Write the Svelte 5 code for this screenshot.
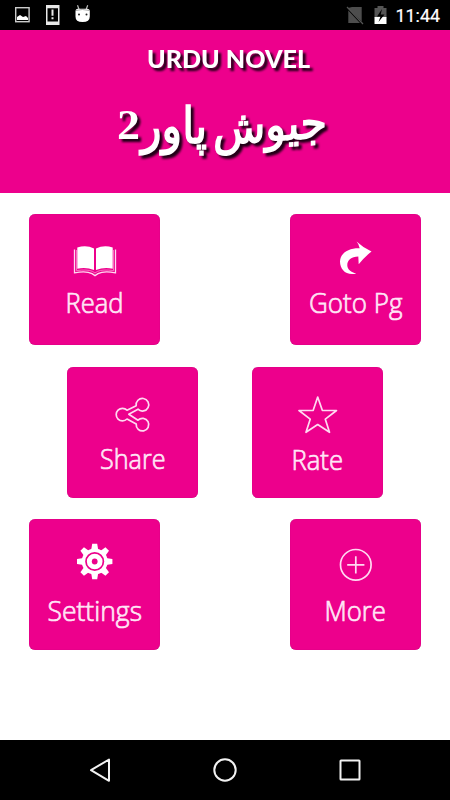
<script>
  const rows = [
    [
      { name: 'Read', x: 36.5, w: 58, y: 98.500 },
      { name: 'Goto Pg', x: 19, w: 93.5, y: 98.500 }
    ],
    [
      { name: 'Share', x: 33, w: 65.5, y: 101.500 },
      { name: 'Rate', x: 39.500, w: 51.500, y: 102.800 }
    ],
    [
      { name: 'Settings', x: 18.500, w: 94.500, y: 101.500 },
      { name: 'More', x: 34.500, w: 61.500, y: 102 }
    ]
  ];
</script>

<div class="screen">
  <div class="status">
    <svg width="100" height="30" viewBox="0 0 100 30">
      <rect x="15.700" y="7.700" width="13.400" height="14" fill="none" stroke="#ccc" stroke-width="1.400" />
      <path d="M17 20v-3l3-2 3 2 3-1 2 2v2z" fill="#fff" />
      <path d="M46 5h13.500v20H46zM47.500 8.200v13.300h10.500V8.200z" fill="#e8e8e8" fill-rule="evenodd" />
      <path d="M51.500 9.500h2v6.300h-2zM51.500 17.200h2v2h-2z" fill="#e8e8e8" />
      <path d="M77.500 5.300l1.500 4M87.700 5.300l-1.500 4" stroke="#bbb" stroke-width="1.200" />
      <path d="M75.500 11q0-2 2-2.300h10q2.300.3 2.300 2.300v5.500q0 5.500-7.200 5.500t-7.100-5.500z" fill="#fff" />
      <path d="M76 10.500q6-2 13.500 0" stroke="#aaa" stroke-width="1" fill="none" />
      <circle cx="79" cy="14.500" r="1" fill="#222" /><circle cx="86.500" cy="14.500" r="1" fill="#222" />
    </svg>
    <svg width="110" height="30" viewBox="340 0 110 30">
      <path d="M352 7h9.700v14.500L348 8zM348.300 10.500L360 23h-11.700z" fill="#4d4d4d" />
      <path d="M347 7l16 17" stroke="#555" stroke-width="1.200" />
      <path d="M374.500 8h3V6h6v2h3v9.500h-12z" fill="#555" />
      <path d="M374.500 17h12v7h-12z" fill="#fff" />
      <path d="M382 9l-5 7.500h3.500l-2 5.500 6-7.500h-3.800z" fill="#000" />
      <text x="395.500" y="22" textLength="44.500" lengthAdjust="spacingAndGlyphs" class="clock">11:44</text>
    </svg>
  </div>

  <header>
    <svg width="450" height="163" viewBox="0 30 450 163">
      <g class="shadowed">
        <text x="147" y="67.500" textLength="163" lengthAdjust="spacingAndGlyphs" class="brand">URDU NOVEL</text>
        <g class="urdu">
          <g transform="translate(213 145) skewY(-4) scale(1 1.2)"><text textLength="114" lengthAdjust="spacingAndGlyphs">جیوش</text></g>
          <g transform="translate(141 143) scale(1 1.300)"><text textLength="66" lengthAdjust="spacingAndGlyphs">پاور</text></g>
        </g>
        <text x="117" y="138.500" textLength="23" lengthAdjust="spacingAndGlyphs" class="num">2</text>
      </g>
    </svg>
  </header>

  <main>
    {#each rows as row, i}
      <div class="row" class:inner={i === 1}>
        {#each row as t}
          <button class="tile" aria-label={t.name}>
            <svg width="131" height="131" viewBox="0 0 131 131">
              {#if t.name === 'Read'}
                <path d="M48.300 33.500q9-3 16.700 1v21.500q-8-3.300-16.700-1.300zM67 34.500q8-4 16.700-1v21.200q-8.700-2-16.700 1.300z" fill="#fff" />
                <path d="M45.500 35.500v23.300q12-2 17.500.8l3 2 3-2q5.500-2.800 17.500-.8V35.500" fill="none" stroke="#ffd9f1" stroke-width="1.300" />
                <path d="M47.500 36v20.600q11-1.500 16 .8l2.500 1.600 2.500-1.600q5-2.300 16-.8V36" fill="none" stroke="#ffb8e4" stroke-width=".6" />
              {:else if t.name === 'Goto Pg'}
                <path d="M66.500 27.500Q73.500 34 81.500 37.500 74 43.500 68.700 50.200L68.300 42.500C61 42.500 57 46.500 57.300 51.500 57.500 55.500 61 58.200 66.300 59.600 56 62 50 55.500 50 47.500 50.500 38 60 33.800 69.700 34.200Q69 30 66.500 27.500z" fill="#fff" />
              {:else if t.name === 'Share'}
                <path d="M60 43.200L69.200 38.700A6.300 6.300 0 1 1 71 42.200L61.800 47.200L71 53.200A6.300 6.300 0 1 1 69.200 57L60 52A6.300 6.300 0 1 1 60 43.200z" class="line" />
              {:else if t.name === 'Rate'}
                <path d="M65.700 30L70.300 43.300 84.500 43.500 73.300 52.200 77.500 65.300 65.700 57.500 54 65.300 58.200 52.200 47 43.500 61.200 43.300z" class="line" />
              {:else if t.name === 'Settings'}
                <g transform="translate(65.700 42.500)" fill="#fff">
                  {#each [0, 45, 90, 135, 180, 225, 270, 315] as a}
                    <path d="M-3.600-11L-2.500-17.700H2.500L3.600-11z" transform="rotate({a})" />
                  {/each}
                  <circle r="13" />
                  <circle r="8.700" fill="none" stroke="#ed008c" stroke-width="1.700" />
                  <circle r="2.900" fill="#ed008c" />
                </g>
              {:else}
                <circle cx="65.800" cy="45.800" r="15.300" class="line" />
                <path d="M57.200 45.800h17.200M65.800 37.200v17.200" class="line" />
              {/if}
              <text x={t.x} y={t.y} textLength={t.w} lengthAdjust="spacingAndGlyphs" class="label">{t.name}</text>
            </svg>
          </button>
        {/each}
      </div>
    {/each}
  </main>

  <nav>
    <svg width="24" height="28" viewBox="88 756 24 28"><path d="M109 759.500v21.300L91 770.200z" /></svg>
    <svg width="28" height="28" viewBox="211 756 28 28"><circle cx="225" cy="770" r="10.700" /></svg>
    <svg width="24" height="28" viewBox="338 756 24 28"><rect x="340.500" y="760.500" width="19" height="19" rx=".5" /></svg>
  </nav>
</div>

<style>
  :global(body) { margin: 0; }
  .screen { width: 450px; height: 800px; background: #fff; display: flex; flex-direction: column; overflow: hidden; }
  svg { display: block; }
  .status { height: 30px; background: #000; display: flex; justify-content: space-between; }
  .clock { font: 400 19px Roboto, sans-serif; fill: #fff; stroke: #fff; stroke-width: .2px; }
  header { height: 163px; background: #ed008c; }
  .shadowed { fill: #fff; filter: drop-shadow(3px 3px 1.200px #200016); }
  .brand { font: 900 24px Lato, sans-serif; }
  .urdu { font: 38px "DejaVu Sans", sans-serif; stroke: #fff; stroke-width: 1.200px; }
  .num { font: bold 42px "Liberation Serif", serif; }
  main { flex: 1; padding-top: 21.400px; display: flex; flex-direction: column; gap: 21.300px; }
  .row { display: flex; justify-content: space-between; padding: 0 29px; }
  .inner { padding: 0 67.400px; }
  .tile { width: 131px; height: 131px; border: 0; padding: 0; border-radius: 6px; background: #ed008c; box-shadow: inset 0 0 1px #b00070; }
  .label { font: 300 27px "Open Sans", sans-serif; fill: #ffe6f6; stroke: #ffe6f6; stroke-width: .7px; }
  .line { fill: none; stroke: #ffd9f1; stroke-width: 1.700px; stroke-linejoin: round; }
  nav { height: 60px; background: #000; display: flex; justify-content: space-between; align-items: center; padding: 0 88px; }
  nav svg { fill: none; stroke: #f2f2f2; stroke-width: 2px; stroke-linejoin: round; }
</style>
